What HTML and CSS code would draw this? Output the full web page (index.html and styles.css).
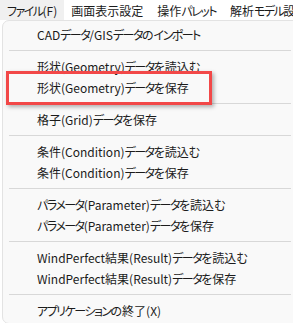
FILE: index.html
```html
<!DOCTYPE html>
<html lang="ja">
<head>
  <meta charset="UTF-8">
  <title>WindPerfect メニュー</title>
  <link rel="stylesheet" href="styles.css">
</head>
<body>

  <div class="menubar">
    <div class="menubar_item active"><span class="kana">ファイル</span>(F)</div>
    <div class="menubar_item">画面表示設定</div>
    <div class="menubar_item">操作<span class="kana">パレット</span></div>
    <div class="menubar_item">解析<span class="kana">モデル</span>設定</div>
  </div>

  <div class="dropdown">
    <div class="menu_item">CAD<span class="kana">データ</span>/GIS<span class="kana">データ</span>の<span class="kana">インポート</span></div>
    <div class="separator"></div>
    <div class="menu_item">形状(Geometry)<span class="kana">データ</span>を読込む</div>
    <div class="menu_item marked">形状(Geometry)<span class="kana">データ</span>を保存</div>
    <div class="separator"></div>
    <div class="menu_item">格子(Grid)<span class="kana">データ</span>を保存</div>
    <div class="separator"></div>
    <div class="menu_item">条件(Condition)<span class="kana">データ</span>を読込む</div>
    <div class="menu_item">条件(Condition)<span class="kana">データ</span>を保存</div>
    <div class="separator"></div>
    <div class="menu_item"><span class="kana">パラメータ</span>(Parameter)<span class="kana">データ</span>を読込む</div>
    <div class="menu_item"><span class="kana">パラメータ</span>(Parameter)<span class="kana">データ</span>を保存</div>
    <div class="separator"></div>
    <div class="menu_item">WindPerfect結果(Result)<span class="kana">データ</span>を読込む</div>
    <div class="menu_item">WindPerfect結果(Result)<span class="kana">データ</span>を保存</div>
    <div class="separator"></div>
    <div class="menu_item"><span class="kana">アプリケーション</span>の終了(X)</div>
  </div>

</body>
</html>
```

FILE: styles.css
```css
body {
  margin: 0;
  background-color: #ffffff;
  font-family: "Noto Sans CJK JP", "Noto Sans", sans-serif;
  font-size: 12px;
  font-feature-settings: "palt";
  color: #1b1b1b;
  overflow: hidden;
  width: 293px;
  height: 323px;
}

/* Yu Gothic UI kana are narrower than Noto's */
.kana {
  letter-spacing: -1.5px;
}

.menubar {
  display: flex;
  height: 20px;
  white-space: nowrap;
  overflow: hidden;
}

.menubar_item {
  padding: 0 7px;
  line-height: 21px;
  flex-shrink: 0;
}

.menubar_item.active {
  background-color: #f0f0f0;
}

.dropdown {
  margin-left: 2px;
  width: 300px;
  padding: 3px 0 2px;
  background-color: #f9f9f9;
  border: 1px solid #e3e3e3;
  border-radius: 7px;
}

.menu_item {
  position: relative;
  height: 21px;
  line-height: 21px;
  padding-left: 34px;
  white-space: nowrap;
}

.separator {
  height: 1px;
  margin: 5px 12px 5px 6px;
  background-color: #d8d8d8;
}

/* red frame drawn over the item */
.marked::after {
  content: "";
  position: absolute;
  top: -6px;
  bottom: -7px;
  left: 3px;
  width: 200px;
  border: 3px solid #f24848;
  box-shadow: 2px 2px 4px rgba(0, 0, 0, 0.3);
}
```
